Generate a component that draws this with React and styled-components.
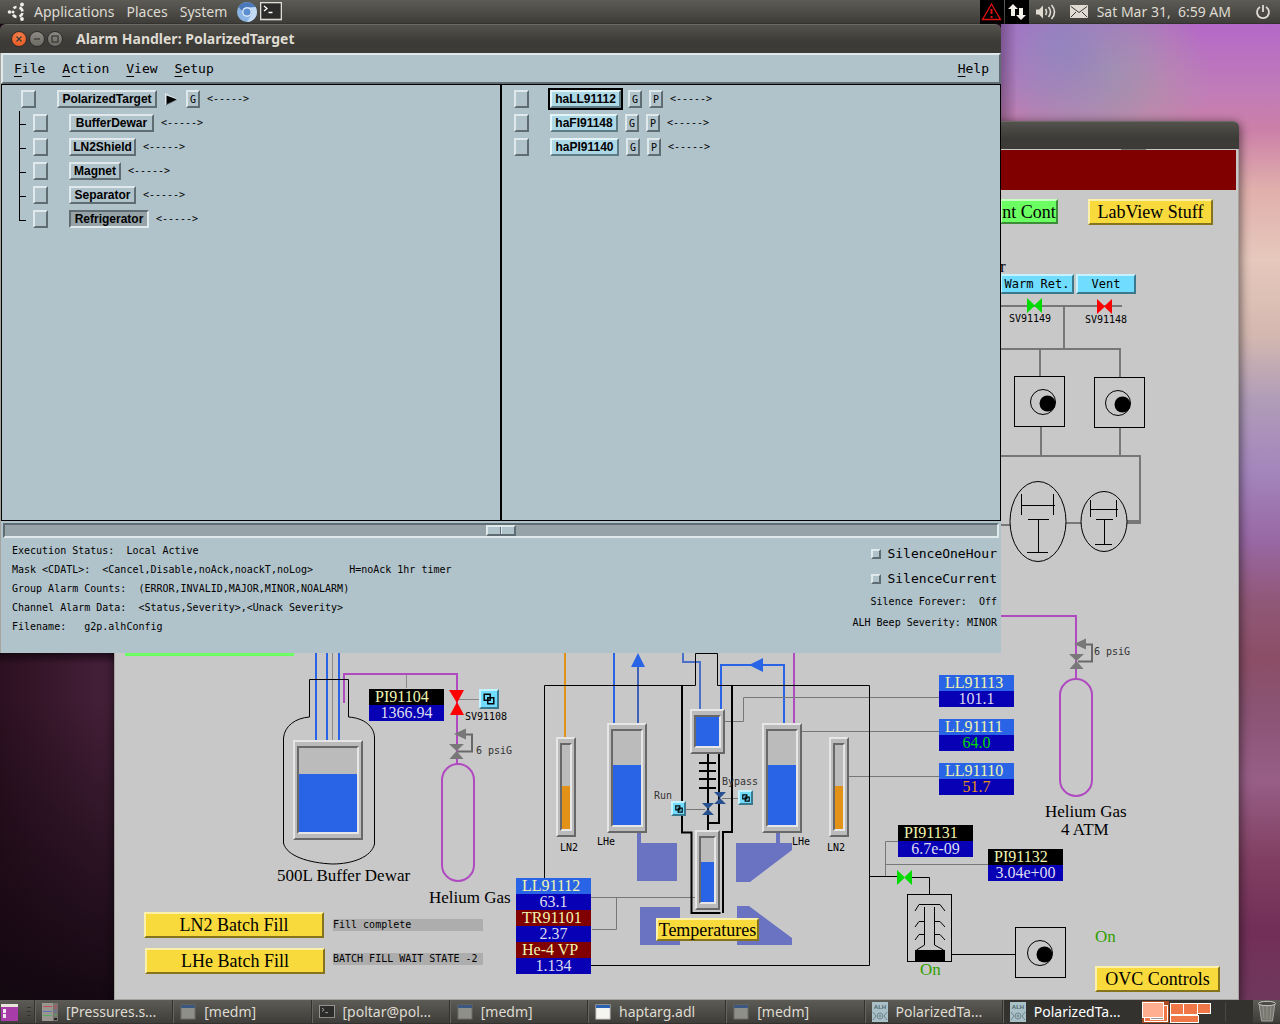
import React from "react";
import styled, { createGlobalStyle, css } from "styled-components";

const ui = `"Noto Sans", "Open Sans", sans-serif`;
const mono = `"DejaVu Sans Mono", "Liberation Mono", monospace`;
const serif = `"Liberation Serif", serif`;

const GlobalStyle = createGlobalStyle`
  * { box-sizing: border-box; }
  body { margin: 0; background: #2b0a1f; }
  button, input { font: inherit; color: inherit; margin: 0; }
`;

/* ---------- desktop ---------- */

const Desktop = styled.div`
  display: flex;
  flex-direction: column;
  min-height: 100vh;
  overflow: hidden;
  font-family: ${ui};
  background:
    linear-gradient(90deg, rgba(40, 20, 50, 0.35), rgba(40, 20, 50, 0)) 1001px 24px / 16px 97px no-repeat,
    radial-gradient(circle at 60px 20px, rgba(144, 132, 192, 0.9), rgba(150, 136, 180, 0) 110px) 1001px 24px / 279px 97px no-repeat,
    radial-gradient(circle at 110px 50px, rgba(172, 152, 166, 0.95), rgba(172, 152, 166, 0) 100px) 1001px 24px / 279px 97px no-repeat,
    linear-gradient(180deg, #b468c8 24px, #c07cb8 90px, #cc80a8 130px, #e0b0ac 190px, #e6c8bc 260px, #d4b8b0 335px, #b09cb8 400px, #a486bc 470px, #9868a4 540px, #905878 600px, #8c4e66 660px, #8a5474 710px, #985e86 780px, #803f62 860px, #722f58 930px, #70385c 1000px) 1001px 0 / 100% 1024px no-repeat,
    linear-gradient(180deg, rgba(8, 2, 8, 0.6) 653px, rgba(8, 2, 8, 0) 664px, rgba(16, 8, 14, 0) 700px, rgba(16, 6, 14, 0.9) 1000px),
    linear-gradient(90deg, #2c1020, #46203a 110px);
`;

const Panel = styled.div`
  position: relative;
  z-index: 3;
  display: flex;
  align-items: center;
  flex: none;
  height: 24px;
  color: #dfdbd2;
  font-size: 14px;
  line-height: 20px;
  background: linear-gradient(#5c5b55, #3e3d39);
  border-bottom: 1px solid #33322f;
`;

const PanelMenus = styled.nav`
  display: flex;
  align-items: center;
  gap: 12px;
  padding-left: 7px;
`;

const PanelButton = styled.button`
  display: flex;
  align-items: center;
  gap: 8px;
  padding: 0;
  border: 0;
  background: none;
`;

const Launchers = styled.div`
  display: flex;
  align-items: center;
  gap: 3px;
  margin-left: 10px;
`;

const Tray = styled.div`
  display: flex;
  align-items: center;
  margin-left: auto;
  padding-right: 9px;
`;

const TrayBox = styled.span`
  display: flex;
  align-items: center;
  justify-content: center;
  width: 24px;
  height: 24px;
  margin-right: 1px;
  background: #000;
`;

const TrayItem = styled(PanelButton)`
  margin-left: ${(p) => p.$gap}px;
`;

const Workspace = styled.main`
  position: relative;
  flex: 1;
  min-height: 976px;
`;

/* ---------- window frames ---------- */

const Frame = styled.section`
  position: absolute;
  top: ${(p) => p.$top}px;
  left: ${(p) => p.$left}px;
  right: ${(p) => p.$right}px;
  z-index: ${(p) => p.$level};
  border-radius: 6px 6px 0 0;
  box-shadow: ${(p) => (p.$shadow ? "0 3px 10px 2px rgba(0, 0, 0, 0.5)" : "none")};
`;

const TitleBar = styled.header`
  display: flex;
  align-items: center;
  height: ${(p) => p.$height}px;
  padding-left: 11px;
  border-radius: 6px 6px 0 0;
  border-top: 1px solid #6a6963;
  color: #dfdbd2;
  background: linear-gradient(#53524c, #3c3b37 60%);
`;

const WindowButtons = styled.div`
  display: flex;
  gap: 2px;
  margin-right: 13px;
`;

const RoundButton = styled.button`
  width: 16px;
  height: 16px;
  padding: 0;
  border: 1px solid #2f2e2b;
  border-radius: 50%;
  color: #3c3b37;
  background: ${(p) => (p.$close ? "radial-gradient(circle at 50% 30%, #f8804c, #e2531c)" : "linear-gradient(#8c8a82, #6b6a63)")};
  svg { display: block; }
`;

const Title = styled.h1`
  margin: 0;
  font-size: 14px;
  line-height: 20px;
  font-weight: 700;
`;

/* ---------- alarm handler ---------- */

const raised = css`
  border: 2px solid;
  border-color: #dfe8eb #5f6c71 #5f6c71 #dfe8eb;
`;
const sunken = css`
  border: 2px solid;
  border-color: #5f6c71 #dfe8eb #dfe8eb #5f6c71;
`;

const AlarmBody = styled.div`
  border-left: 1px solid #a5a49e;
  color: #000;
  background: #b0c2ca;
`;

const MenuBar = styled.nav`
  display: flex;
  align-items: center;
  gap: 17px;
  height: 31px;
  padding: 0 10px 0 11px;
  font-family: ${mono};
  font-size: 13px;
  ${raised}
`;

const MenuButton = styled.button`
  padding: 0;
  border: 0;
  background: none;
  line-height: 20px;
  margin-left: ${(p) => (p.$end ? "auto" : 0)};
  u { text-underline-offset: 3px; }
`;

const Panes = styled.div`
  display: grid;
  grid-template-columns: calc(50% - 1px) 1fr;
  min-height: 437px;
  border: 1px solid #000;
`;

const Pane = styled.div`
  padding: 2px 0 0 ${(p) => p.$inset}px;
  & + & { border-left: 2px solid #000; }
`;

const Row = styled.div`
  position: relative;
  display: flex;
  align-items: center;
  height: 24px;
  padding-left: ${(p) => (p.$child ? 12 : 0)}px;
  ${(p) => p.$child && css`
    &::before {
      content: "";
      position: absolute;
      left: -2px;
      top: 0;
      height: ${p.$last ? 14 : 24}px;
      border-left: 1px solid #000;
    }
    &::after {
      content: "";
      position: absolute;
      left: -2px;
      top: 13px;
      width: 7px;
      border-top: 1px solid #000;
    }
  `}
`;

const AckButton = styled.button`
  width: 15px;
  height: 18px;
  padding: 0;
  margin-right: 21px;
  background: none;
  ${raised}
`;

const NameButton = styled.button`
  min-width: ${(p) => p.$width}px;
  height: 18px;
  padding: 0 2px;
  font: 700 12px/13px "Liberation Sans", Arial, sans-serif;
  background: ${(p) => (p.$channel ? "#add8e6" : p.$on ? "#96a4aa" : "transparent")};
  ${(p) => (p.$on ? sunken : raised)}
  ${(p) => p.$channel && css`border-color: #e2f4f8 #5f7c84 #5f7c84 #e2f4f8;`}
  ${(p) => p.$focus && css`outline: 2px solid #000;`}
`;

const LetterButton = styled.button`
  width: 14px;
  height: 18px;
  margin-left: 7px;
  padding: 0;
  font: 10px/13px ${mono};
  background: none;
  ${raised}
`;

const MoreButton = styled.button`
  display: flex;
  margin: 0 1px 0 8px;
  padding: 0;
  border: 0;
  background: none;
`;

const Mask = styled.span`
  margin-left: 7px;
  font: 10px/16px ${mono};
`;

const Sash = styled.input`
  display: block;
  appearance: none;
  width: calc(100% - 4px);
  height: 15px;
  margin: 2px 2px 0;
  background: #96a4aa;
  ${sunken}
  &::-webkit-slider-thumb {
    appearance: none;
    width: 30px;
    height: 11px;
    border: 2px solid;
    border-color: #dfe8eb #5f6c71 #5f6c71 #dfe8eb;
    background: linear-gradient(90deg, #b0c2ca 12px, #5f6c71 12px 13px, #dfe8eb 13px 14px, #b0c2ca 14px);
  }
`;

const Status = styled.div`
  display: flex;
  justify-content: space-between;
  padding: 3px 4px 17px 11px;
  font: 10px/19px ${mono};
`;

const Line = styled.div`
  white-space: pre;
`;

const Silence = styled.div`
  display: flex;
  flex-direction: column;
  align-items: flex-end;
`;

const Toggle = styled.label`
  display: flex;
  align-items: center;
  gap: 6px;
  font-size: 13px;
  height: 25px;
`;

const Box = styled.input`
  appearance: none;
  width: 10px;
  height: 10px;
  ${raised}
`;

const SilenceLine = styled.div`
  height: 21px;
  line-height: 22px;
  white-space: pre;
`;

/* ---------- process diagram ---------- */

const Canvas = styled.div`
  position: relative;
  height: 851px;
  background: #c8c8c8;
  border: 1px solid #a5a49e;
  border-top: 0;
  overflow: hidden;
`;

const Banner = styled.div`
  height: 41px;
  margin-right: 2px;
  border-top: 1px solid #c8c8c8;
  background: #800000;
`;

const Drawing = styled.svg`
  position: absolute;
  left: 0;
  top: 0;
`;

/* diagram coordinates are those of the screen; the canvas begins at 115, 149 */
const placed = css`
  position: absolute;
  left: ${(p) => p.$x - 115}px;
  top: ${(p) => p.$y - 149}px;
`;

const tones = {
  yellow: ["#f8da3c", "#fdf0a8", "#86741c"],
  green: ["#6cff62", "#c4ffc0", "#3c8c38"],
  cyan: ["#70dcff", "#c4f2ff", "#3c788c"],
};

const DiagramButton = styled.button`
  ${placed}
  display: flex;
  align-items: center;
  justify-content: center;
  width: ${(p) => p.$w}px;
  height: ${(p) => p.$h}px;
  padding: 0;
  white-space: nowrap;
  font: ${(p) => (p.$small ? `12px/16px ${mono}` : `18px/20px ${serif}`)};
  border: 2px solid;
  background: ${(p) => tones[p.$tone][0]};
  border-color: ${({ $tone: t }) => `${tones[t][1]} ${tones[t][2]} ${tones[t][2]} ${tones[t][1]}`};
`;

const Label = styled.span`
  ${placed}
  white-space: nowrap;
  color: ${(p) => p.$color || "#000"};
  font: ${(p) => (p.$big ? `17px/18px ${serif}` : `10px/12px ${mono}`)};
`;

const TagBox = styled.div`
  ${placed}
  width: 75px;
  font: 16px/16px ${serif};
`;

const TagName = styled.div`
  height: 16px;
  padding-left: 6px;
  color: #f0f4b0;
  background: ${(p) => p.$bg};
`;

const TagValue = styled.div`
  height: 16px;
  text-align: center;
  color: ${(p) => p.$color || "#dcdcf0"};
  background: #0800b4;
`;

const Message = styled.div`
  ${placed}
  width: 150px;
  height: 12px;
  font: 10px/11px ${mono};
  white-space: nowrap;
  background: #adadad;
`;

const GaugeFrame = styled.div`
  ${placed}
  width: ${(p) => p.$w}px;
  height: ${(p) => p.$h}px;
  padding: 4px 2px;
  border: 2px solid;
  border-color: #e6e6e6 #686868 #686868 #e6e6e6;
  background: #bbb;
`;

const GaugeWell = styled.div`
  display: flex;
  align-items: flex-end;
  height: 100%;
  border: 2px solid;
  border-color: #686868 #e6e6e6 #e6e6e6 #686868;
`;

const GaugeFill = styled.div`
  width: 100%;
  background: ${(p) => p.$color};
`;

const Gauge = ({ x, y, w, h, level, color = "#2a64e6" }) => (
  <GaugeFrame $x={x} $y={y} $w={w} $h={h}>
    <GaugeWell><GaugeFill $color={color} style={{ height: `${level}%` }} /></GaugeWell>
  </GaugeFrame>
);

const tagColors = { blue: "#2a64e6", black: "#000", red: "#800000" };

const Tag = ({ x, y, name, value, kind = "blue", color }) => (
  <TagBox $x={x} $y={y}>
    <TagName $bg={tagColors[kind]}>{name}</TagName>
    <TagValue $color={color}>{value}</TagValue>
  </TagBox>
);

const Copies = ({ size }) => (
  <svg width={size} height={size} viewBox="0 0 10 10" fill="none" stroke="#000" strokeWidth={size > 9 ? 1.2 : 1.5}>
    <path d="M1 1h5v5H1zM4 4h5v5H4z" />
  </svg>
);

/* ---------- taskbar ---------- */

const Tasks = styled.div`
  display: flex;
  flex: 1;
  min-width: 0;
`;

const Task = styled.button`
  display: flex;
  align-items: center;
  gap: 8px;
  flex: 1 1 0;
  min-width: 0;
  height: 23px;
  padding: 0 7px;
  border: 0;
  border-left: 1px solid #33322e;
  box-shadow: inset 1px 0 #66655f;
  color: ${(p) => (p.$active ? "#fff" : "#dfdbd2")};
  background: ${(p) => (p.$active ? "#33322f" : "transparent")};
  svg { flex: none; }
  span { overflow: hidden; white-space: nowrap; }
`;

const DesktopButton = styled(PanelButton)`
  width: 34px;
  height: 23px;
`;

const Pager = styled.div`
  display: flex;
  height: 23px;
  background: #33322f;
`;

const Trash = styled(PanelButton)`
  width: 27px;
  justify-content: center;
`;

/* ---------- icons ---------- */

const UbuntuIcon = () => (
  <svg width="19" height="19" viewBox="0 0 19 19" fill="none" stroke="#f2efe8" strokeWidth="2.6">
    <path d="M6.500 6.200A5 5 0 0 1 9.500 5M12.500 5.500a5 5 0 0 1 3 4M15.500 11A5 5 0 0 1 12.500 14.500M9.500 15a5 5 0 0 1-3.500-2.200" />
    <g fill="#f2efe8" stroke="none"><circle cx="2.500" cy="10" r="1.800" /><circle cx="15" cy="2.500" r="1.900" /><circle cx="15" cy="17" r="1.900" /><circle cx="6" cy="10" r="1.500" /></g>
  </svg>
);

const BrowserIcon = () => (
  <svg width="20" height="20" viewBox="0 0 20 20">
    <circle cx="10" cy="10" r="10" fill="#8ab4e4" />
    <path d="M1.500 5A10 10 0 0 1 18.600 5H10a5 5 0 0 0-4.600 4z" fill="#4a78b8" />
    <path d="M18.600 5A10 10 0 0 1 10 20l4.400-7.600A5 5 0 0 0 13 6z" fill="#c2daf4" />
    <circle cx="10" cy="10" r="4.800" fill="#e4eefa" />
    <circle cx="10" cy="10" r="3.600" fill="#5a8ed0" />
  </svg>
);

const TerminalIcon = ({ size = 22, dim }) => (
  <svg width={size} height={size * 0.82} viewBox="0 0 22 18">
    <rect x="0.500" y="0.500" width="21" height="17" fill="#2c2c2a" stroke={dim ? "#999" : "#dcdcd8"} strokeWidth="1.600" />
    <path d="M4 4l3 2.500L4 9M8.500 10.500h4" fill="none" stroke={dim ? "#aaa" : "#fff"} strokeWidth="1.300" />
  </svg>
);

const WindowIcon = ({ bright }) => (
  <svg width="16" height="16" viewBox="0 0 16 16">
    <rect x="1" y="1" width="14" height="14" fill={bright ? "#f4f4f0" : "#8f8f8a"} stroke={bright ? "#ccc" : "#6d6c68"} />
    <path d="M1 1h14v3H1z" fill={bright ? "#2c62b4" : "#3c5880"} />
  </svg>
);

const SheetIcon = () => (
  <svg width="16" height="18" viewBox="0 0 16 18">
    <rect width="11" height="18" fill="#99958f" />
    <rect x="11" width="5" height="18" fill="#77746f" />
    <path d="M1 3.500h9M12 3h3M12 5h3" stroke="#c0505c" />
    <path d="M1 8.500h9M12 8h3" stroke="#6070b8" />
    <path d="M1 12.500h9M12 12h3" stroke="#58a868" />
    <path d="M12 16h3" stroke="#222" strokeWidth="2" />
  </svg>
);

const AlarmIcon = () => (
  <svg width="16" height="20" viewBox="0 0 16 20">
    <rect width="16" height="20" fill="#a9c0c8" />
    <text x="8" y="7" textAnchor="middle" fontSize="6" fontWeight="700" fontFamily="Liberation Sans" fill="#50656c">ALH</text>
    <g fill="none" stroke="#6d858d"><circle cx="8" cy="14" r="3" /><circle cx="8" cy="14" r="1" /><path d="M1 10l3 4-3 4M15 10l-3 4 3 4" /></g>
  </svg>
);

const PagerIcon = () => (
  <svg width="113" height="23" viewBox="0 0 113 23">
    <rect x="2" y="1" width="27" height="22" fill="#a84a20" />
    <g stroke="#fff" fill="#f07848">
      <rect x="4.500" y="5.500" width="23" height="16" />
      <rect x="10.500" y="13.500" width="13" height="6" fill="#999" />
      <rect x="2.500" y="2.500" width="21" height="15" fill="#ffae90" />
      <rect x="30.500" y="3.500" width="13" height="11" />
      <rect x="43.500" y="3.500" width="14" height="11" />
      <rect x="57.500" y="3.500" width="13" height="10" />
      <rect x="30.500" y="15.500" width="28" height="7" />
    </g>
    <path d="M85.500 2v20" stroke="#494844" />
  </svg>
);

const TrashIcon = () => (
  <svg width="20" height="23" viewBox="0 0 20 23">
    <path d="M2 3l2.500 18h11L18 3z" fill="#77766f" stroke="#a5a49e" />
    <path d="M6 6l1 13M10 6v13M14 6l-1 13" stroke="#94938c" />
    <ellipse cx="10" cy="3.500" rx="8.500" ry="2.200" fill="#4c4b47" stroke="#c8c7c0" />
  </svg>
);

/* ---------- diagram drawing ---------- */

const Regulator = ({ x, y }) => (
  <g transform={`translate(${x} ${y})`}>
    <path d="M8 .5h7v17H1" fill="none" stroke="#686868" strokeWidth="2" />
    <path d="M-3 0l12-5.500v11zM-8 10h15l-7.500 7zM-.5 17l7 8h-14z" fill="#787878" />
  </g>
);

const Pump = ({ x, y, cx }) => (
  <g transform={`translate(${x} ${y})`}>
    <rect x=".5" y=".5" width="50" height="50" fill="none" stroke="#000" />
    <circle cx={cx} cy="26" r="12.500" fill="none" stroke="#000" />
    <circle cx={cx + 4.5} cy="27.500" r="8" fill="#000" />
  </g>
);

const Valve = ({ x, y, color }) => (
  <path d={`M${x} ${y}v15l8-7.500zM${x + 15} ${y}v15l-8-7.500z`} fill={color} />
);

const Piping = () => (
  <Drawing width="1122" height="850" viewBox="115 149 1122 850" fill="none">
    <path d="M1121 149.500h25" stroke="#777" />
    <g stroke="#777" strokeWidth="2">
      <path d="M1000 306h122M1064 306v44M1000 349h120v28M1040 349v27M1041 427v29M1120 428v28M1000 456h140v66M1000 525h10M1066 523h15" />
      <path d="M1127 522h14" strokeWidth="4" />
    </g>
    <Valve x={1027} y={298} color="#00dc00" />
    <Valve x={1097} y={299} color="#ff0000" />
    <Pump x={1014} y={376} cx={29} />
    <Pump x={1094} y={377} cx={24} />
    <g stroke="#000">
      <ellipse cx="1038" cy="521.500" rx="28" ry="40" />
      <ellipse cx="1104" cy="521.500" rx="23" ry="30" />
      <path d="M1021.500 494v21M1053.500 494v21M1021 505.500h34M1028 519.500h21M1038.500 519v33M1027 552.500h21" />
      <path d="M1090.500 500v17M1116.500 500v17M1090 509.500h28M1096 519.500h17M1104.500 519v25M1095 544.500h17" />
    </g>

    <g stroke="#b04ac0" strokeWidth="2">
      <path d="M1000 616h76v62M344 703v-29h113v91M794 650v73" />
      <rect x="1060" y="679" width="32" height="117" rx="16" />
      <rect x="442" y="764" width="32" height="117" rx="16" />
    </g>
    <Regulator x={1077} y={644} />
    <Regulator x={457} y={734} />

    <path d="M125 650h169v6H125z" fill="#6cff62" />
    <path d="M316 650v92M327 650v92M339 650v92" stroke="#2a64e6" strokeWidth="2" />
    <path d="M332.500 650v92M406.500 675v13M457 699.500h22" stroke="#888" />
    <path d="M309.500 717v-37.500h39V717c15 1 26 9 26 21v106c-3 13-22 20-42 20-24-1-46-8-49-21V738c1-12 12-20 26-21z" stroke="#000" />
    <path d="M449 690h15l-7 13zM457 702l7 13h-14z" fill="#f00" />

    <path d="M637 830h4v13h36v38h-40zM640 907h40v38h-40zM776 830h4v13h12v7l-42 32h-14v-39h40zM737 906h12l43 32v7h-55z" fill="#6a73c2" />
    <path d="M565 650v90" stroke="#e29216" strokeWidth="2" />
    <path d="M614 650v75M721 710v-45h63v60" stroke="#2a64e6" strokeWidth="2" />
    <path d="M638 660v65" stroke="#3d62b8" strokeWidth="2" />
    <path d="M683 650v12h17v50" stroke="#4a70c8" strokeWidth="2" />
    <path d="M638 653l7 14h-14zM749 665l14-7v14z" fill="#2a64e6" />
    <path d="M725 721.500h18.500v-24H939M801 731.500h144M849 776.500h92M591 897.500h104M592 929.500h24.500v-32M898 841.500h-12.500v35M885 864.500h103M685 809.500h20M722 798.500h16" stroke="#777" />
    <path d="M544.500 880V685.500h151v-32h22v32h152v280H590M869 876.500h28M911 877.500h18.500v17" stroke="#000" />
    <path d="M682 685v147.500h9.500V913h29M732 685v147h-9v81M708 753v78M719 753v70h-11M699 763h17M699 771h17M699 779h17M699 788h17" stroke="#000" strokeWidth="2" />
    <path d="M702 803h12l-12 12h12zM714 792h12l-12 12h12z" fill="#27508f" />

    <Valve x={897} y={870} color="#00dc00" />
    <g stroke="#000">
      <rect x="907.500" y="894.500" width="44" height="67" />
      <path d="M915 911l4-6.500h21l5 6.500M924.500 907v38l-8 5M934.500 907v38l9 5M915 927l4-5.500h5M935 921.500h5l5 5.500M915 940l4-5.500h5M935 934.500h5l5 5.500M952 954.500h63" />
    </g>
    <path d="M915 950h30v11h-30z" fill="#000" />
    <Pump x={1015} y={927} cx={25} />
  </Drawing>
);

const Controls = () => (
  <>
    <DiagramButton $x={1000} $y={199} $w={58} $h={25} $tone="green">nt Cont</DiagramButton>
    <DiagramButton $x={1088} $y={199} $w={125} $h={26} $tone="yellow">LabView Stuff</DiagramButton>
    <DiagramButton $x={1000} $y={274} $w={74} $h={20} $tone="cyan" $small>Warm Ret.</DiagramButton>
    <DiagramButton $x={1076} $y={274} $w={60} $h={20} $tone="cyan" $small>Vent</DiagramButton>
    <DiagramButton $x={144} $y={912} $w={180} $h={26} $tone="yellow">LN2 Batch Fill</DiagramButton>
    <DiagramButton $x={145} $y={948} $w={180} $h={26} $tone="yellow">LHe Batch Fill</DiagramButton>
    <DiagramButton $x={656} $y={918} $w={103} $h={23} $tone="yellow">Temperatures</DiagramButton>
    <DiagramButton $x={1095} $y={966} $w={125} $h={26} $tone="yellow">OVC Controls</DiagramButton>
    <DiagramButton $x={479} $y={689} $w={20} $h={20} $tone="cyan" aria-label="SV91108"><Copies size={12} /></DiagramButton>
    <DiagramButton $x={671} $y={801} $w={15} $h={15} $tone="cyan" aria-label="Run"><Copies size={8} /></DiagramButton>
    <DiagramButton $x={738} $y={790} $w={15} $h={15} $tone="cyan" aria-label="Bypass"><Copies size={8} /></DiagramButton>
  </>
);

const labels = [
  [1009, 313, "SV91149"], [1085, 314, "SV91148"], [1094, 646, "6 psiG", "#333"],
  [465, 711, "SV91108"], [476, 745, "6 psiG", "#333"], [654, 790, "Run", "#333"], [722, 776, "Bypass", "#333"],
  [560, 842, "LN2"], [597, 836, "LHe"], [792, 836, "LHe"], [827, 842, "LN2"],
];

const bigLabels = [
  [1000, 258, "r"], [277, 867, "500L Buffer Dewar"], [429, 889, "Helium Gas"], [1045, 803, "Helium Gas"], [1061, 821, "4 ATM"],
  [920, 961, "On", "#30a000"], [1095, 928, "On", "#30a000"],
];

const gauges = [
  { x: 293, y: 740, w: 70, h: 100, level: 69 },
  { x: 607, y: 723, w: 40, h: 110, level: 64 },
  { x: 762, y: 723, w: 40, h: 110, level: 64 },
  { x: 690, y: 709, w: 35, h: 45, level: 100 },
  { x: 695, y: 830, w: 25, h: 80, level: 63 },
  { x: 556, y: 737, w: 20, h: 100, level: 51, color: "#e29216" },
  { x: 829, y: 737, w: 20, h: 100, level: 51, color: "#e29216" },
];

const tags = [
  { x: 369, y: 689, name: "PI91104", value: "1366.94", kind: "black" },
  { x: 939, y: 675, name: "LL91113", value: "101.1" },
  { x: 939, y: 719, name: "LL91111", value: "64.0", color: "#00d800" },
  { x: 939, y: 763, name: "LL91110", value: "51.7", color: "#e29216" },
  { x: 898, y: 825, name: "PI91131", value: "6.7e-09", kind: "black" },
  { x: 988, y: 849, name: "PI91132", value: "3.04e+00", kind: "black" },
  { x: 516, y: 878, name: "LL91112", value: "63.1" },
  { x: 516, y: 910, name: "TR91101", value: "2.37", kind: "red" },
  { x: 516, y: 942, name: "He-4 VP", value: "1.134", kind: "red" },
];

const ProcessWindow = () => (
  <Frame $top={97} $left={114} $right={41} $level={1} $shadow>
    <TitleBar $height={28} />
    <Canvas>
      <Banner />
      <Piping />
      {gauges.map((g) => <Gauge key={`${g.x}-${g.y}`} {...g} />)}
      {tags.map((t) => <Tag key={t.name} {...t} />)}
      {labels.map(([x, y, text, color]) => <Label key={`${x}-${y}`} $x={x} $y={y} $color={color}>{text}</Label>)}
      {bigLabels.map(([x, y, text, color]) => <Label key={`${x}-${y}`} $x={x} $y={y} $color={color} $big>{text}</Label>)}
      <Message $x={333} $y={919}>Fill complete</Message>
      <Message $x={333} $y={953}>BATCH FILL WAIT STATE -2</Message>
      <Controls />
    </Canvas>
  </Frame>
);

/* ---------- alarm handler window ---------- */

const groups = [
  { name: "BufferDewar", width: 85 },
  { name: "LN2Shield", width: 67 },
  { name: "Magnet", width: 52 },
  { name: "Separator", width: 67 },
  { name: "Refrigerator", width: 80, on: true },
];

const channels = [
  { name: "haLL91112", width: 71, focus: true },
  { name: "haFI91148", width: 68 },
  { name: "haPI91140", width: 69 },
];

const MASK = "<----->";

const Menu = ({ text, end }) => (
  <MenuButton $end={end}><u>{text[0]}</u>{text.slice(1)}</MenuButton>
);

const AlarmWindow = () => (
  <Frame $top={0} $left={0} $right={279} $level={2}>
    <TitleBar $height={29}>
      <WindowButtons>
        <RoundButton $close aria-label="Close"><svg width="14" height="14" stroke="#3c3b37" strokeWidth="1.300"><path d="M4.500 4.500l5 5M9.500 4.500l-5 5" /></svg></RoundButton>
        <RoundButton aria-label="Minimize"><svg width="14" height="14" stroke="#3c3b37" strokeWidth="1.300"><path d="M4 7h6" /></svg></RoundButton>
        <RoundButton aria-label="Maximize"><svg width="14" height="14" fill="none" stroke="#3c3b37" strokeWidth="1.300"><rect x="4" y="4" width="6" height="6" /></svg></RoundButton>
      </WindowButtons>
      <Title>Alarm Handler: PolarizedTarget</Title>
    </TitleBar>
    <AlarmBody>
      <MenuBar>
        <Menu text="File" /><Menu text="Action" /><Menu text="View" /><Menu text="Setup" /><Menu text="Help" end />
      </MenuBar>
      <Panes>
        <Pane $inset={19}>
          <Row>
            <AckButton aria-label="Acknowledge PolarizedTarget" />
            <NameButton $width={100}>PolarizedTarget</NameButton>
            <MoreButton aria-label="Expand">
              <svg width="13" height="13" viewBox="0 0 13 13"><path d="M0 0l13 6.500L0 13z" fill="#dfe8eb" /><path d="M13 6.500L0 13l2-3z" fill="#5f6c71" /><path d="M1.500 2.500L12 6.500l-10.500 4.500z" /></svg>
            </MoreButton>
            <LetterButton>G</LetterButton>
            <Mask>{MASK}</Mask>
          </Row>
          {groups.map((g, i) => (
            <Row key={g.name} $child $last={i === groups.length - 1}>
              <AckButton aria-label={`Acknowledge ${g.name}`} />
              <NameButton $width={g.width} $on={g.on}>{g.name}</NameButton>
              <Mask>{MASK}</Mask>
            </Row>
          ))}
        </Pane>
        <Pane $inset={12}>
          {channels.map((c) => (
            <Row key={c.name}>
              <AckButton aria-label={`Acknowledge ${c.name}`} />
              <NameButton $width={c.width} $channel $focus={c.focus}>{c.name}</NameButton>
              <LetterButton>G</LetterButton>
              <LetterButton>P</LetterButton>
              <Mask>{MASK}</Mask>
            </Row>
          ))}
        </Pane>
      </Panes>
      <Sash type="range" min="0" max="100" defaultValue="50" aria-label="Pane split" />
      <Status>
        <div>
          <Line>{"Execution Status:  Local Active"}</Line>
          <Line>{"Mask <CDATL>:  <Cancel,Disable,noAck,noackT,noLog>      H=noAck 1hr timer"}</Line>
          <Line>{"Group Alarm Counts:  (ERROR,INVALID,MAJOR,MINOR,NOALARM)"}</Line>
          <Line>{"Channel Alarm Data:  <Status,Severity>,<Unack Severity>"}</Line>
          <Line>{"Filename:   g2p.alhConfig"}</Line>
        </div>
        <Silence>
          <Toggle><Box type="checkbox" />SilenceOneHour</Toggle>
          <Toggle><Box type="checkbox" />SilenceCurrent</Toggle>
          <SilenceLine>{"Silence Forever:  Off"}</SilenceLine>
          <SilenceLine>{"ALH Beep Severity: MINOR"}</SilenceLine>
        </Silence>
      </Status>
    </AlarmBody>
  </Frame>
);

/* ---------- panels ---------- */

const TopPanel = () => (
  <Panel>
    <PanelMenus>
      <PanelButton><UbuntuIcon />Applications</PanelButton>
      <PanelButton>Places</PanelButton>
      <PanelButton>System</PanelButton>
    </PanelMenus>
    <Launchers>
      <PanelButton aria-label="Browser"><BrowserIcon /></PanelButton>
      <PanelButton aria-label="Terminal"><TerminalIcon /></PanelButton>
    </Launchers>
    <Tray>
      <TrayBox>
        <svg width="21" height="19" viewBox="0 0 21 19" fill="none" stroke="#e01010" strokeWidth="1.300"><path d="M10.500 2L19.500 17.500h-18z" /><path d="M10.500 7v5M10.500 14v2" strokeWidth="2" /></svg>
      </TrayBox>
      <TrayBox>
        <svg width="20" height="18" viewBox="0 0 20 18" fill="#f2efe8"><path d="M6 1l5 5H8v7H4V6H1zM14 17l-5-5h3V5h4v7h3z" /></svg>
      </TrayBox>
      <TrayItem $gap={5} aria-label="Volume">
        <svg width="21" height="18" viewBox="0 0 21 18" fill="none" stroke="#dfdbd2" strokeWidth="1.600"><path d="M1 6.500h3l4-4v13l-4-4H1z" fill="#dfdbd2" stroke="none" /><path d="M10.500 6q2 3 0 6M13.500 4q4 5 0 10M16.500 2q6 7 0 14" /></svg>
      </TrayItem>
      <TrayItem $gap={14} aria-label="Mail">
        <svg width="18" height="13" viewBox="0 0 18 13"><rect width="18" height="13" rx="1" fill="#dfdbd2" /><path d="M1 1.500l8 6 8-6M1 12l5-5M17 12l-5-5" fill="none" stroke="#3c3b37" /></svg>
      </TrayItem>
      <TrayItem $gap={9}>Sat Mar 31,&nbsp; 6:59 AM</TrayItem>
      <TrayItem $gap={24} aria-label="Power">
        <svg width="16" height="16" viewBox="0 0 16 16" fill="none" stroke="#dfdbd2" strokeWidth="1.800"><path d="M5 3a6 6 0 1 0 6 0M8 1v7" /></svg>
      </TrayItem>
    </Tray>
  </Panel>
);

const BottomPanel = () => (
  <Panel>
    <DesktopButton aria-label="Show desktop">
      <svg width="34" height="23" viewBox="0 0 34 23"><path d="M1 4h17v17H1z" fill="#a83ca8" /><path d="M1 4h17v3H1z" fill="#e8e6dc" /><path d="M3 9h3v4H3zM3 14h3v4H3z" fill="#f0e8f0" /><path d="M27 7.500h4M27 11.500h4M27 15.500h4" stroke="#34332f" /></svg>
    </DesktopButton>
    <Tasks>
      <Task><SheetIcon /><span>[Pressures.s...</span></Task>
      <Task><WindowIcon /><span>[medm]</span></Task>
      <Task><TerminalIcon size={16} dim /><span>[poltar@pol...</span></Task>
      <Task><WindowIcon /><span>[medm]</span></Task>
      <Task><WindowIcon bright /><span>haptarg.adl</span></Task>
      <Task><WindowIcon /><span>[medm]</span></Task>
      <Task><AlarmIcon /><span>PolarizedTa...</span></Task>
      <Task $active><AlarmIcon /><span>PolarizedTa...</span></Task>
    </Tasks>
    <Pager><PagerIcon /></Pager>
    <Trash aria-label="Trash"><TrashIcon /></Trash>
  </Panel>
);

export default function App() {
  return (
    <>
      <GlobalStyle />
      <Desktop>
        <TopPanel />
        <Workspace>
          <ProcessWindow />
          <AlarmWindow />
        </Workspace>
        <BottomPanel />
      </Desktop>
    </>
  );
}
